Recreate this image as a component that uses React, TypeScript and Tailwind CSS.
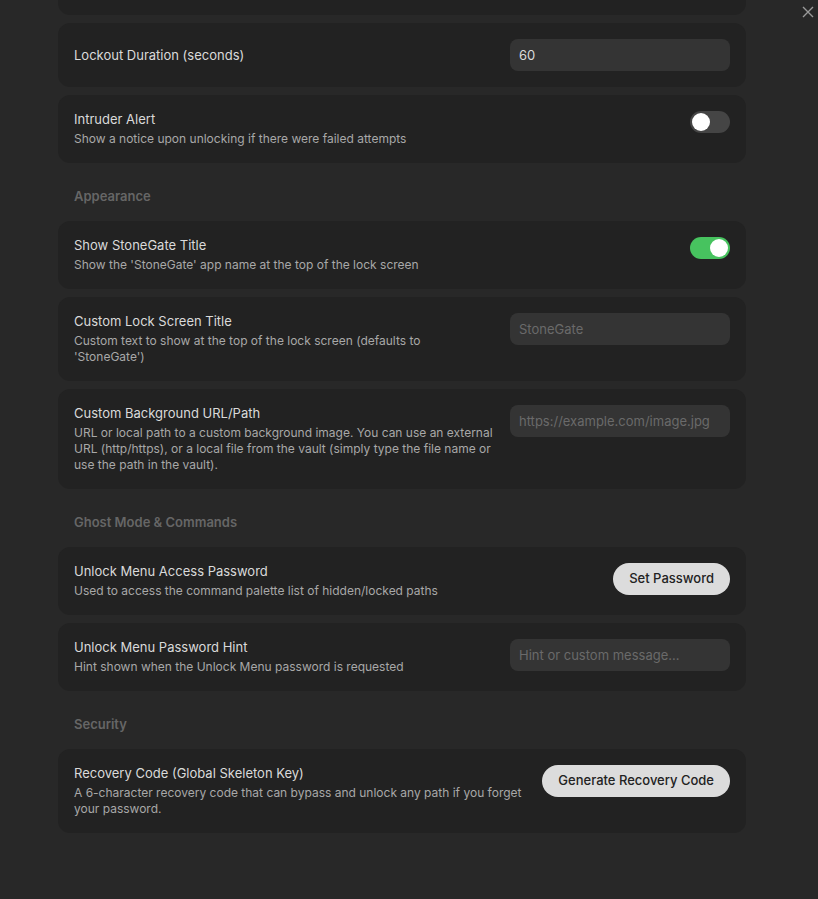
import React from "react";

type Row = {
  title: string;
  desc?: string;
  control: React.ReactNode;
  center?: boolean;
};

const Toggle = ({ on }: { on: boolean }) => (
  <div
    className={
      "relative h-[22px] w-[40px] rounded-full " +
      (on ? "bg-[#47c35f]" : "bg-[#454545]")
    }
  >
    <div
      className={
        "absolute top-[2px] h-[18px] w-[18px] rounded-full bg-white " +
        (on ? "left-[20px]" : "left-[2px]")
      }
    />
  </div>
);

const TextInput = ({ value, placeholder }: { value?: string; placeholder?: string }) => (
  <div className="flex h-[32px] w-[220px] items-center rounded-lg bg-[#343434] px-[9px] pt-[1px] text-[13px]">
    {value ? (
      <span className="text-[#dadada]">{value}</span>
    ) : (
      <span className="text-[#6a6a6a]">{placeholder}</span>
    )}
  </div>
);

const Button = ({ label }: { label: string }) => (
  <button className="h-[32px] rounded-full bg-[#dcdcdc] px-4 text-[13px] font-medium text-[#222]">
    {label}
  </button>
);

const SettingCard = ({ title, desc, control, center }: Row) => (
  <div
    className={
      "flex gap-4 rounded-xl bg-[#222222] p-4 " + (center ? "items-center" : "items-start")
    }
  >
    <div className="flex-1">
      <div className="text-[13px] leading-[17px] text-[#dadada]">{title}</div>
      {desc && (
        <div className="mt-[3px] text-[12px] leading-[16px] text-[#a8a8a8]">{desc}</div>
      )}
    </div>
    <div className="shrink-0">{control}</div>
  </div>
);

const SectionHeader = ({ label }: { label: string }) => (
  <div className="mb-4 mt-6 px-4 text-[13px] font-semibold leading-[18px] text-[#666666]">
    {label}
  </div>
);

export default function App() {
  return (
    <div
      className="relative min-h-[899px] w-full bg-[#282828]"
      style={{ fontFamily: "Inter, 'Noto Sans', sans-serif" }}
    >
      <button className="absolute right-[3px] top-[5px] text-[#9a9a9a]">
        <svg width="14" height="14" viewBox="0 0 14 14" fill="none" stroke="currentColor" strokeWidth="1.4">
          <path d="M2 2 L12 12 M12 2 L2 12" />
        </svg>
      </button>

      <div className="ml-[58px] flex w-[688px] flex-col">
        <div className="h-[15px] rounded-b-xl bg-[#222222]" />
        <div className="mt-2 flex flex-col gap-2">
          <SettingCard
            title="Lockout Duration (seconds)"
            center
            control={<TextInput value="60" />}
          />
          <SettingCard
            title="Intruder Alert"
            desc="Show a notice upon unlocking if there were failed attempts"
            control={<Toggle on={false} />}
          />
        </div>

        <SectionHeader label="Appearance" />
        <div className="flex flex-col gap-2">
          <SettingCard
            title="Show StoneGate Title"
            desc="Show the 'StoneGate' app name at the top of the lock screen"
            control={<Toggle on />}
          />
          <SettingCard
            title="Custom Lock Screen Title"
            desc="Custom text to show at the top of the lock screen (defaults to 'StoneGate')"
            control={<TextInput placeholder="StoneGate" />}
          />
          <SettingCard
            title="Custom Background URL/Path"
            desc="URL or local path to a custom background image. You can use an external URL (http/https), or a local file from the vault (simply type the file name or use the path in the vault)."
            control={<TextInput placeholder="https://example.com/image.jpg" />}
          />
        </div>

        <SectionHeader label="Ghost Mode & Commands" />
        <div className="flex flex-col gap-2">
          <SettingCard
            title="Unlock Menu Access Password"
            desc="Used to access the command palette list of hidden/locked paths"
            control={<Button label="Set Password" />}
          />
          <SettingCard
            title="Unlock Menu Password Hint"
            desc="Hint shown when the Unlock Menu password is requested"
            control={<TextInput placeholder="Hint or custom message..." />}
          />
        </div>

        <SectionHeader label="Security" />
        <div className="flex flex-col gap-2">
          <SettingCard
            title="Recovery Code (Global Skeleton Key)"
            desc="A 6-character recovery code that can bypass and unlock any path if you forget your password."
            control={<Button label="Generate Recovery Code" />}
          />
        </div>
      </div>
    </div>
  );
}
